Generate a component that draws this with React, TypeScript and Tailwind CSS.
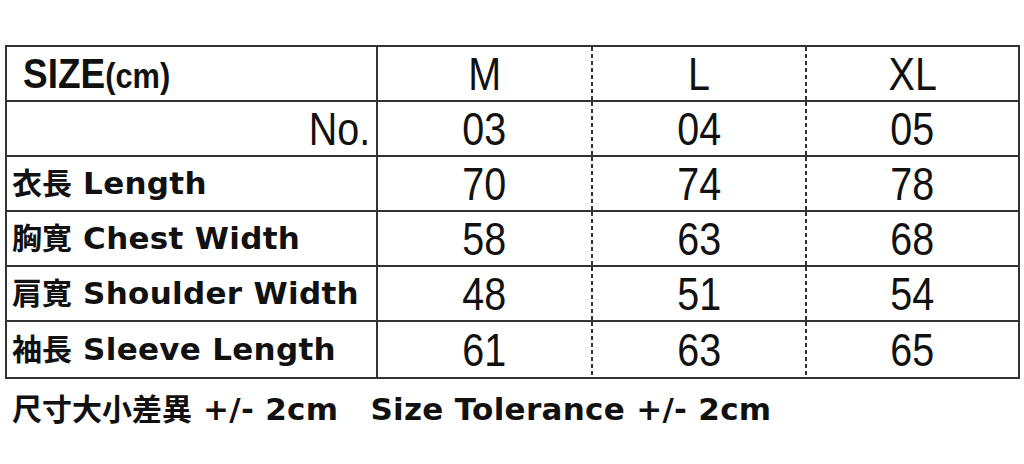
import React from "react";

const arial = "font-['Liberation_Sans','Arial',sans-serif]";
const dv = "font-['DejaVu_Sans','Noto_Sans_CJK_JP',sans-serif] font-bold";
const cjk = "font-['Noto_Sans_CJK_JP','DejaVu_Sans',sans-serif] font-bold";
const dash =
  "bg-[repeating-linear-gradient(to_bottom,#333_0_4px,transparent_4px_7px)] bg-[length:2px_100%] bg-right bg-no-repeat";

const rows: { jp: string; en: string; vals: string[] }[] = [
  { jp: "衣長", en: "Length", vals: ["70", "74", "78"] },
  { jp: "胸寛", en: "Chest Width", vals: ["58", "63", "68"] },
  { jp: "肩寛", en: "Shoulder Width", vals: ["48", "51", "54"] },
  { jp: "袖長", en: "Sleeve Length", vals: ["61", "63", "65"] },
];

function Num({ children }: { children: React.ReactNode }) {
  return (
    <span className={`${arial} inline-block text-[47px] leading-none text-[#111] scale-x-[0.84]`}>
      {children}
    </span>
  );
}

function ValCells({ vals }: { vals: string[] }) {
  return (
    <>
      <div className={`w-[215px] pr-[2px] flex items-center justify-center ${dash}`}>
        <Num>{vals[0]}</Num>
      </div>
      <div className={`w-[214px] pr-[2px] flex items-center justify-center ${dash}`}>
        <Num>{vals[1]}</Num>
      </div>
      <div className="flex-1 flex items-center justify-center">
        <Num>{vals[2]}</Num>
      </div>
    </>
  );
}

export default function App() {
  return (
    <div className="w-[1024px] h-[464px] bg-white overflow-hidden">
      <div className="ml-[5px] mt-[45px] w-[1015px] border-2 border-[#333] flex flex-col">
        <div className="h-[55px] flex border-b-2 border-[#333]">
          <div className="w-[371px] border-r-2 border-[#333] flex items-center pl-[16px]">
            <span className={`${arial} font-bold text-[#111] inline-block origin-left scale-x-[0.88] whitespace-nowrap leading-none`}>
              <span className="text-[42px]">SIZE</span>
              <span className="text-[35px]">(cm)</span>
            </span>
          </div>
          <ValCells vals={["M", "L", "XL"]} />
        </div>
        <div className="h-[55px] flex border-b-2 border-[#333]">
          <div className="w-[371px] border-r-2 border-[#333] flex items-center justify-end pr-[6px]">
            <span className={`${arial} inline-block text-[47px] leading-none text-[#111] origin-right scale-x-[0.84]`}>No.</span>
          </div>
          <ValCells vals={["03", "04", "05"]} />
        </div>
        {rows.map((r, i) => (
          <div
            key={r.en}
            className={`h-[55px] flex ${i < rows.length - 1 ? "border-b-2 border-[#333]" : ""}`}
          >
            <div className="w-[371px] border-r-2 border-[#333] flex items-center pl-[5px] pb-[4px]">
              <div className="flex items-baseline whitespace-pre text-[#111] leading-[30px]">
                <span className={`${cjk} text-[30px]`}>{r.jp}</span>
                <span className={`${dv} text-[31px] tracking-[0.3px]`}> {r.en}</span>
              </div>
            </div>
            <ValCells vals={r.vals} />
          </div>
        ))}
      </div>
      <div className="text-[#111] mt-[13px] pl-[12px] whitespace-pre leading-[30px] flex items-baseline">
        <span className={`${cjk} text-[30px]`}>尺寸大小差異</span>
        <span className={`${dv} text-[31px] tracking-[0.3px]`}> +/- 2cm</span>
        <span className={`${dv} text-[31px] tracking-[0.3px] ml-[32px]`}>Size Tolerance +/- 2cm</span>
      </div>
    </div>
  );
}
